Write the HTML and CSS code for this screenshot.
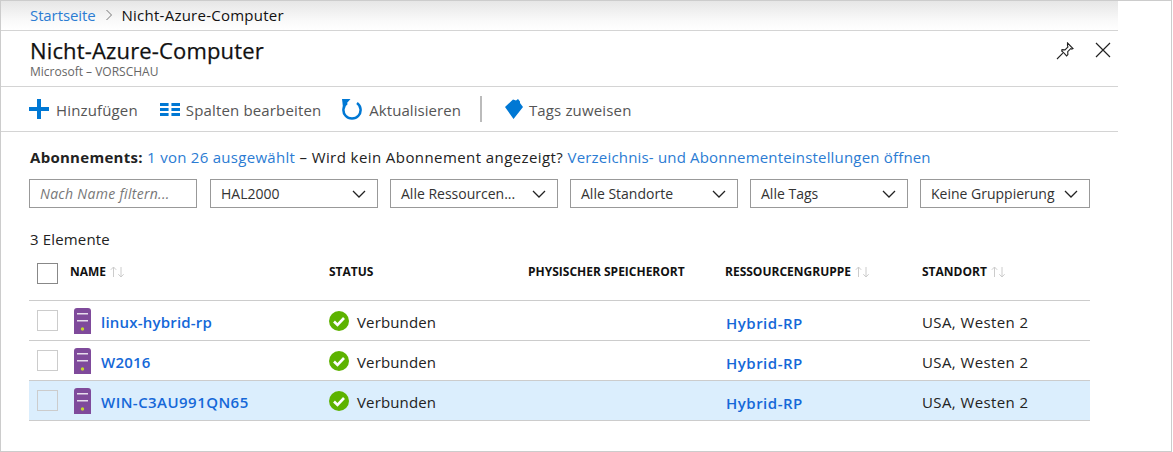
FILE: index.html
```html
<!DOCTYPE html>
<html lang="de">
<head>
  <meta charset="UTF-8" />
  <title>Nicht-Azure-Computer</title>
  <link rel="stylesheet" href="styles.css">
</head>
<body>
  <div class="frame">
    <div class="panel">
      <nav class="breadcrumb">
        <a href="#">Startseite</a>
        <svg class="crumb-sep" width="8" height="12" viewBox="0 0 8 12"><path d="M1.500 1l5 5-5 5" fill="none" stroke="#777" stroke-width="1"/></svg>
        <span>Nicht-Azure-Computer</span>
      </nav>

      <header class="blade-head">
        <div>
          <h1>Nicht-Azure-Computer</h1>
          <p class="subtitle">Microsoft – VORSCHAU</p>
        </div>
        <div class="blade-actions">
          <svg width="18" height="18" viewBox="0 0 18 18"><path d="M11.500 1l5.500 5.500-1.300.6-1-.5-3 3 .2 3-1.300 1.300-2.300-2.600-2.600-2.300L6 7.700l3 .2 3-3-.5-1z M6.800 11.200L1 17" fill="none" stroke="#222" stroke-width="1.100"/></svg>
          <svg width="16" height="16" viewBox="0 0 16 16"><path d="M1 1l14 14M15 1L1 15" fill="none" stroke="#222" stroke-width="1.200"/></svg>
        </div>
      </header>

      <div class="toolbar">
        <button class="tool">
          <svg width="20" height="20" viewBox="0 0 20 20"><path d="M8 0h4v8h8v4h-8v8H8v-8H0V8h8z" fill="#0078d4"/></svg>
          Hinzufügen
        </button>
        <button class="tool tool-tight tool-columns">
          <svg width="20" height="13" viewBox="0 0 21 13" fill="#0078d4" preserveAspectRatio="none"><path d="M0 0h9v3H0zM12 0h9v3h-9zM0 5h9v3H0zM12 5h9v3h-9zM0 10h9v3H0zM12 10h9v3h-9z"/></svg>
          Spalten bearbeiten
        </button>
        <button class="tool tool-refresh">
          <svg width="20" height="21" viewBox="0 0 20 21"><path d="M5 4a8.600 8.600 0 1 0 10 0" fill="none" stroke="#0078d4" stroke-width="2.500"/><path d="M0 0h8.500L1 8.500z" fill="#0078d4"/></svg>
          Aktualisieren
        </button>
        <span class="tool-divider"></span>
        <button class="tool tool-tight">
          <svg width="18" height="20" viewBox="0 0 18 20"><path d="M0 8L8 .5l3 1L13 0l2 2.500V4l3 4-9.500 12z" fill="#0078d4"/></svg>
          Tags zuweisen
        </button>
      </div>

      <div class="content">
        <p class="subscriptions">
          <b class="sub-first">Abonnements:</b> <a class="sub-first" href="#">1 von 26 ausgewählt</a> – Wird kein Abonnement angezeigt? <a class="sub-last" href="#">Verzeichnis- und Abonnementeinstellungen öffnen</a>
        </p>

        <div class="filters">
          <div class="filter filter-input">Nach Name filtern...</div>
          <div class="filter"><span>HAL2000</span><svg class="chev" width="14" height="8" viewBox="0 0 14 8"><path d="M1 1l6 6 6-6" /></svg></div>
          <div class="filter"><span>Alle Ressourcen...</span><svg class="chev" width="14" height="8" viewBox="0 0 14 8"><path d="M1 1l6 6 6-6" /></svg></div>
          <div class="filter"><span>Alle Standorte</span><svg class="chev" width="14" height="8" viewBox="0 0 14 8"><path d="M1 1l6 6 6-6" /></svg></div>
          <div class="filter filter-short"><span>Alle Tags</span><svg class="chev" width="14" height="8" viewBox="0 0 14 8"><path d="M1 1l6 6 6-6" /></svg></div>
          <div class="filter filter-wide"><span>Keine Gruppierung</span><svg class="chev" width="14" height="8" viewBox="0 0 14 8"><path d="M1 1l6 6 6-6" /></svg></div>
        </div>

        <p class="count">3 Elemente</p>

        <div class="row row-head">
          <div class="cell-name"><span class="check check-head"></span><span class="th">NAME</span><svg class="sort" width="15" height="12" viewBox="0 0 15 12"><use href="#sort-icon"/></svg></div>
          <div class="th">STATUS</div>
          <div class="th">PHYSISCHER SPEICHERORT</div>
          <div class="cell-sort"><span class="th">RESSOURCENGRUPPE</span><svg class="sort" width="15" height="12" viewBox="0 0 15 12"><use href="#sort-icon"/></svg></div>
          <div class="cell-sort"><span class="th">STANDORT</span><svg class="sort" width="15" height="12" viewBox="0 0 15 12"><use href="#sort-icon"/></svg></div>
        </div>

        <div class="row">
          <div class="cell-name"><span class="check"></span><svg class="server" width="17" height="26" viewBox="0 0 17 26"><use href="#server-icon"/></svg><a class="name-link" href="#">linux-hybrid-rp</a></div>
          <div class="cell-status"><svg width="20" height="20" viewBox="0 0 20 20"><use href="#ok-icon"/></svg><span class="cell-text">Verbunden</span></div>
          <div></div>
          <div><a class="name-link group-link" href="#">Hybrid-RP</a></div>
          <div class="cell-text cell-place">USA, Westen 2</div>
        </div>
        <div class="row">
          <div class="cell-name"><span class="check"></span><svg class="server" width="17" height="26" viewBox="0 0 17 26"><use href="#server-icon"/></svg><a class="name-link" href="#">W2016</a></div>
          <div class="cell-status"><svg width="20" height="20" viewBox="0 0 20 20"><use href="#ok-icon"/></svg><span class="cell-text">Verbunden</span></div>
          <div></div>
          <div><a class="name-link group-link" href="#">Hybrid-RP</a></div>
          <div class="cell-text cell-place">USA, Westen 2</div>
        </div>
        <div class="row row-selected">
          <div class="cell-name"><span class="check"></span><svg class="server" width="17" height="26" viewBox="0 0 17 26"><use href="#server-icon"/></svg><a class="name-link name-long" href="#">WIN-C3AU991QN65</a></div>
          <div class="cell-status"><svg width="20" height="20" viewBox="0 0 20 20"><use href="#ok-icon"/></svg><span class="cell-text">Verbunden</span></div>
          <div></div>
          <div><a class="name-link group-link" href="#">Hybrid-RP</a></div>
          <div class="cell-text cell-place">USA, Westen 2</div>
        </div>
      </div>
    </div>
  </div>

  <svg width="0" height="0" class="defs">
    <symbol id="server-icon" viewBox="0 0 17 26">
      <path d="M3 0h11a3 3 0 0 1 3 3v23H0V3a3 3 0 0 1 3-3z" fill="#7f4a9b"/>
      <path d="M3 5h11v1.500H3zM3 12h11v1.500H3z" fill="#e6dcec"/>
      <circle cx="8.500" cy="21" r="1.700" fill="#c4d82e"/>
    </symbol>
    <symbol id="ok-icon" viewBox="0 0 20 20">
      <circle cx="10" cy="10" r="10" fill="#5db300"/>
      <path d="M5 10.500l3.500 3.500L15 7" fill="none" stroke="#fff" stroke-width="2.600"/>
    </symbol>
    <symbol id="sort-icon" viewBox="0 0 15 12">
      <path d="M3.500 11V1M.8 3.800l2.700-2.800 2.700 2.800M11 1v10M8.300 8.200l2.700 2.800 2.700-2.800" fill="none" stroke="#ccc" stroke-width="1"/>
    </symbol>
  </svg>
</body>
</html>
```

FILE: styles.css
```css
body {
  margin: 0;
  font-family: "Open Sans", "Noto Sans", sans-serif;
  font-size: 14px;
  color: #222;
  background: white;
}
a {
  color: #2b7cd3;
  text-decoration: none;
}
.defs {
  display: block;
  height: 0;
}
.frame {
  width: 1170px;
  height: 450px;
  border: 1px solid #ccc;
  overflow: hidden;
}
.panel {
  width: 1117px;
}
.breadcrumb {
  display: flex;
  align-items: center;
  gap: 9px;
  box-sizing: border-box;
  height: 30px;
  padding: 0 0 2px 29px;
  font-size: 15px;
  background: linear-gradient(#e6e6e6, #fafafa 70%, white);
  border-bottom: 1px solid #d4d4d4;
}
.breadcrumb a {
  letter-spacing: -0.1px;
}
.breadcrumb span {
  letter-spacing: 0.25px;
  color: #111;
}
.blade-head {
  display: flex;
  justify-content: space-between;
  height: 55px;
  padding-left: 29px;
  border-bottom: 1px solid #d4d4d4;
}
h1 {
  margin: 5px 0 0;
  font-size: 22px;
  font-weight: 400;
  letter-spacing: 0.15px;
  line-height: 28px;
  color: #111;
  -webkit-text-stroke: 0.25px #111;
}
.subtitle {
  margin: 1px 0 0;
  font-size: 12px;
  line-height: 14px;
  color: #666;
}
.blade-actions {
  display: flex;
  align-items: flex-start;
  gap: 21px;
  padding: 11px 7px 0 0;
}
.toolbar {
  display: flex;
  align-items: center;
  height: 44px;
  padding-left: 28px;
  border-bottom: 1px solid #d4d4d4;
}
.tool {
  display: flex;
  align-items: center;
  gap: 7px;
  margin-right: 22px;
  padding: 2px 0 0;
  border: none;
  background: none;
  font: inherit;
  font-size: 15px;
  letter-spacing: 0.15px;
  color: #555;
}
.tool svg {
  margin-top: -2px;
}
.tool-tight {
  gap: 6px;
}
.tool-columns {
  margin-right: 21px;
}
.tool-refresh {
  margin-right: 19px;
  letter-spacing: 0.05px;
}
.tool-divider {
  width: 2px;
  height: 26px;
  margin-right: 23px;
  background: #bbb;
}
.content {
  padding: 0 28px;
}
.subscriptions {
  margin: 15px 0 0 1px;
  font-size: 15px;
  letter-spacing: 0.42px;
  line-height: 20px;
  white-space: nowrap;
}
.sub-first {
  letter-spacing: 0.28px;
}
.sub-last {
  letter-spacing: 0.18px;
}
.filters {
  display: flex;
  gap: 12px;
  margin-top: 12px;
}
.filter {
  display: flex;
  align-items: center;
  justify-content: space-between;
  box-sizing: border-box;
  width: 168px;
  height: 29px;
  padding: 0 11px 0 10px;
  border: 1px solid #999;
  color: #333;
}
.filter-short {
  width: 158px;
}
.filter-wide {
  width: 170px;
}
.filter-input {
  margin-right: 1px;
  font-style: italic;
  letter-spacing: 0.3px;
  color: #777;
}
.chev {
  fill: none;
  stroke: #222;
  stroke-width: 1.300;
}
.count {
  margin: 21px 0 0 1px;
  font-size: 15px;
  letter-spacing: 0.15px;
  line-height: 20px;
}
.row {
  display: grid;
  grid-template-columns: 300px 199px 197px 197px 168px;
  align-items: center;
  height: 39px;
  border-bottom: 1px solid #ccc;
}
.row-head {
  align-items: start;
  height: 37px;
  padding-top: 14px;
}
.row-selected {
  background: #dbeefd;
}
.th {
  margin-top: 1px;
  font-size: 12px;
  font-weight: 700;
  line-height: 16px;
  color: #111;
}
.sort {
  margin: 3px 0 0 4px;
}
.cell-sort {
  display: flex;
  align-items: flex-start;
}
.cell-name {
  display: flex;
  align-items: center;
  padding-left: 8px;
}
.row-head .cell-name {
  align-items: flex-start;
}
.check {
  box-sizing: border-box;
  width: 21px;
  height: 21px;
  border: 1px solid #ccc;
  margin-right: 16px;
}
.check-head {
  border-color: #888;
  margin-right: 12px;
}
.server {
  margin-top: 1px;
  margin-right: 10px;
}
.name-link {
  display: block;
  padding-top: 2px;
  font-size: 15px;
  font-weight: 600;
  letter-spacing: 0.2px;
  color: #1568d8;
}
.name-long {
  letter-spacing: 0.45px;
}
.group-link {
  padding: 4px 0 0 1px;
  letter-spacing: 0.5px;
}
.cell-status {
  display: flex;
  align-items: center;
  gap: 8px;
}
.cell-text {
  padding-top: 2px;
  font-size: 15px;
  letter-spacing: 0.15px;
}
.cell-place {
  letter-spacing: 0.4px;
}
```
